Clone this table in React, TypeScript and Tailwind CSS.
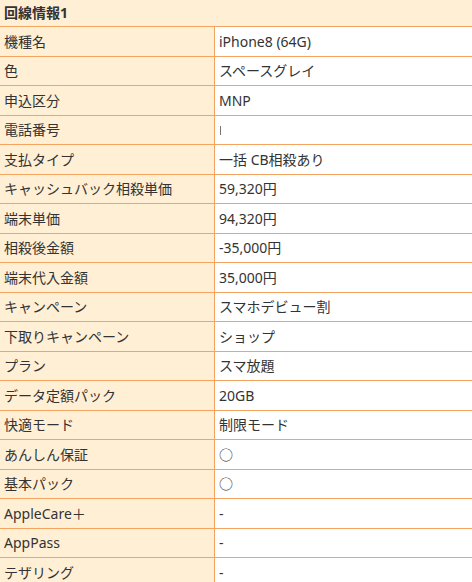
import React from 'react';

const rows: [string, string][] = [
  ['機種名', 'iPhone8 (64G)'],
  ['色', 'スペースグレイ'],
  ['申込区分', 'MNP'],
  ['電話番号', '|'],
  ['支払タイプ', '一括 CB相殺あり'],
  ['キャッシュバック相殺単価', '59,320円'],
  ['端末単価', '94,320円'],
  ['相殺後金額', '-35,000円'],
  ['端末代入金額', '35,000円'],
  ['キャンペーン', 'スマホデビュー割'],
  ['下取りキャンペーン', 'ショップ'],
  ['プラン', 'スマ放題'],
  ['データ定額パック', '20GB'],
  ['快適モード', '制限モード'],
  ['あんしん保証', '○'],
  ['基本パック', '○'],
  ['AppleCare＋', '-'],
  ['AppPass', '-'],
  ['テザリング', '-'],
];

const App: React.FC = () => {
  return (
    <div
      className="w-[472px] h-[582px] overflow-hidden bg-white text-[14px] text-[#333]"
      style={{ fontFamily: '"Noto Sans", "Noto Sans CJK JP", sans-serif' }}
    >
      {/* header */}
      <div className="h-[27px] flex items-center px-1 pb-[2px] bg-[#ffefd5] border-b border-[#f4a460] font-bold">
        回線情報1
      </div>

      {rows.map(([label, value]) => (
        <div key={label} className="flex h-[29.5px] border-b border-[#f4a460]">
          <div className="w-[215px] shrink-0 flex items-center px-1 bg-[#ffefd5] border-r border-[#f4a460] whitespace-nowrap">
            {label}
          </div>
          <div className="flex-1 flex items-center pl-1 whitespace-nowrap">
            {value === '|' ? (
              <span className="inline-block w-[1px] h-[9px] bg-[#777] ml-[1px] mt-[1px]" />
            ) : (
              value
            )}
          </div>
        </div>
      ))}
    </div>
  );
};

export default App;
